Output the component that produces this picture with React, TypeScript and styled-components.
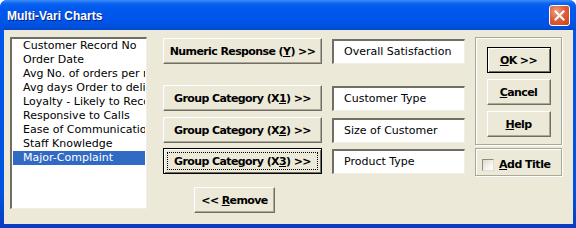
import React from "react";
import styled, { createGlobalStyle } from "styled-components";

const Global = createGlobalStyle`
  html, body { margin: 0; padding: 0; background: #ffffff; }
  body { width: 576px; height: 228px; overflow: hidden; }
`;

const Window = styled.div`
  width: 576px;
  height: 228px;
  display: flex;
  flex-direction: column;
  box-sizing: border-box;
  background: linear-gradient(180deg, #0058ee 0%, #0053e0 85%, #0a3cc0 100%);
  border-radius: 7px 7px 0 0;
  overflow: hidden;
`;

const TitleBar = styled.div`
  height: 30px;
  flex: none;
  display: flex;
  align-items: center;
  justify-content: space-between;
  padding: 0 6px 0 7px;
  box-sizing: border-box;
  background: linear-gradient(
    180deg,
    #3d8ef8 0%,
    #0a62f0 12%,
    #0058ee 30%,
    #0055e8 70%,
    #0050dc 90%,
    #0046c8 100%
  );
`;

const Title = styled.span`
  font-family: "Liberation Sans", Arial, sans-serif;
  font-weight: bold;
  font-size: 12px;
  color: #ffffff;
  text-shadow: 1px 1px 0 #0a1e80;
  margin-top: 1px;
`;

const CloseButton = styled.div`
  width: 21px;
  height: 21px;
  box-sizing: border-box;
  border: 1px solid #ffffff;
  border-radius: 3px;
  background: radial-gradient(circle at 35% 30%, #f0a088 0%, #e0603c 45%, #c8401c 100%);
  display: flex;
  align-items: center;
  justify-content: center;
  margin-top: 1px;
`;

const Client = styled.div`
  flex: 1;
  margin: 0 3px 4px 4px;
  background: #ece9d8;
  display: flex;
  align-items: flex-start;
  padding: 7px 0 0 6px;
  box-sizing: border-box;
`;

const ListBox = styled.div`
  width: 137px;
  height: 172px;
  box-sizing: border-box;
  background: #ffffff;
  border-top: 2px solid #716f64;
  border-left: 2px solid #716f64;
  border-right: 1px solid #f1efe2;
  border-bottom: 1px solid #f1efe2;
  padding: 0 1px 0 1px;
  display: flex;
  flex-direction: column;
  overflow: hidden;
`;

const ListItem = styled.div<{ $selected?: boolean }>`
  font-family: "DejaVu Sans", sans-serif;
  font-size: 11px;
  line-height: 14px;
  height: 14px;
  flex: none;
  padding-left: 10px;
  white-space: nowrap;
  overflow: hidden;
  color: ${(p) => (p.$selected ? "#ffffff" : "#000000")};
  background: ${(p) => (p.$selected ? "#316ac5" : "transparent")};
`;

const Middle = styled.div`
  display: flex;
  flex-direction: column;
  margin-left: 16px;
`;

const Row = styled.div<{ $top: number; $indent?: number }>`
  display: flex;
  align-items: center;
  margin-top: ${(p) => p.$top}px;
  padding-left: ${(p) => p.$indent ?? 0}px;
`;

const Button = styled.div<{ $w: number; $h?: number; $focus?: boolean; $default?: boolean }>`
  width: ${(p) => p.$w}px;
  height: ${(p) => p.$h ?? 26}px;
  box-sizing: border-box;
  flex: none;
  position: relative;
  display: flex;
  align-items: center;
  justify-content: center;
  background: #ece9d8;
  font-family: "DejaVu Sans", sans-serif;
  font-weight: bold;
  font-size: 11px;
  letter-spacing: -0.6px;
  color: #000000;
  white-space: pre;
  ${(p) =>
    p.$focus || p.$default
      ? `border: 1px solid #000000;
         box-shadow: inset 1px 1px 0 #ffffff, inset -1px -1px 0 #716f64;`
      : `border-top: 1px solid #ffffff;
         border-left: 1px solid #ffffff;
         border-right: 1px solid #716f64;
         border-bottom: 1px solid #716f64;
         box-shadow: inset -1px -1px 0 #aca899;`}
`;

const Label = styled.span`
  display: inline-block;
`;

const FocusRing = styled.span`
  position: absolute;
  left: 3px;
  top: 3px;
  right: 3px;
  bottom: 3px;
  border: 1px dotted #000000;
  pointer-events: none;
`;

const U = styled.span`
  text-decoration: underline;
`;

const TextBox = styled.div`
  width: 133px;
  height: 25px;
  box-sizing: border-box;
  margin-left: 10px;
  background: #ffffff;
  border-top: 2px solid #716f64;
  border-left: 2px solid #716f64;
  border-right: 1px solid #f1efe2;
  border-bottom: 1px solid #f1efe2;
  padding-left: 10px;
  display: flex;
  align-items: center;
  font-family: "DejaVu Sans", sans-serif;
  font-size: 11px;
  color: #000000;
  white-space: nowrap;
`;

const RightColumn = styled.div`
  display: flex;
  flex-direction: column;
  margin-left: 10px;
`;

const Frame = styled.div<{ $h: number; $top?: number }>`
  width: 87px;
  height: ${(p) => p.$h}px;
  box-sizing: border-box;
  margin-top: ${(p) => p.$top ?? 0}px;
  border: 1px solid #aca899;
  box-shadow: inset 1px 1px 0 #ffffff, 1px 1px 0 #ffffff;
  display: flex;
  flex-direction: column;
  align-items: center;
`;

const ButtonStack = styled.div`
  display: flex;
  flex-direction: column;
  gap: 6px;
  padding-top: 9px;
`;

const CheckRow = styled.div`
  display: flex;
  align-items: center;
  align-self: flex-start;
  padding: 9px 0 0 6px;
  gap: 5px;
  font-family: "DejaVu Sans", sans-serif;
  font-weight: bold;
  font-size: 11px;
  letter-spacing: -0.5px;
`;

const CheckBox = styled.span`
  width: 12px;
  height: 12px;
  box-sizing: border-box;
  border-top: 1px solid #8e8c80;
  border-left: 1px solid #8e8c80;
  border-right: 1px solid #e2dfd2;
  border-bottom: 1px solid #e2dfd2;
  background: linear-gradient(135deg, #dcdad0 0%, #f4f3ee 60%, #ffffff 100%);
`;

const items = [
  "Customer Record No",
  "Order Date",
  "Avg No. of orders per month",
  "Avg days Order to delivery",
  "Loyalty - Likely to Recommend",
  "Responsive to Calls",
  "Ease of Communication",
  "Staff Knowledge",
  "Major-Complaint",
];

export default function App() {
  return (
    <>
      <Global />
      <Window>
        <TitleBar>
          <Title>Multi-Vari Charts</Title>
          <CloseButton>
            <svg width="11" height="11" viewBox="0 0 11 11">
              <path d="M1.5 1.5 L9.5 9.5 M9.5 1.5 L1.5 9.5" stroke="#ffffff" strokeWidth="2" strokeLinecap="square" />
            </svg>
          </CloseButton>
        </TitleBar>
        <Client>
          <ListBox>
            {items.map((t, i) => (
              <ListItem key={t} $selected={i === items.length - 1}>
                {t}
              </ListItem>
            ))}
          </ListBox>
          <Middle>
            <Row $top={1}>
              <Button $w={159}>
                <Label>
                  Numeric Response (<U>Y</U>) &gt;&gt;
                </Label>
              </Button>
              <TextBox>Overall Satisfaction</TextBox>
            </Row>
            <Row $top={21}>
              <Button $w={159}>
                <Label>
                  Group Category (X<U>1</U>) &gt;&gt;
                </Label>
              </Button>
              <TextBox>Customer Type</TextBox>
            </Row>
            <Row $top={6}>
              <Button $w={159}>
                <Label>
                  Group Category (X<U>2</U>) &gt;&gt;
                </Label>
              </Button>
              <TextBox>Size of Customer</TextBox>
            </Row>
            <Row $top={5}>
              <Button $w={159} $focus>
                <FocusRing />
                <Label>
                  Group Category (X<U>3</U>) &gt;&gt;
                </Label>
              </Button>
              <TextBox>Product Type</TextBox>
            </Row>
            <Row $top={13} $indent={31}>
              <Button $w={81}>
                <Label>
                  &lt;&lt; <U>R</U>emove
                </Label>
              </Button>
            </Row>
          </Middle>
          <RightColumn>
            <Frame $h={108}>
              <ButtonStack>
                <Button $w={64} $default>
                  <Label>
                    <U>O</U>K &gt;&gt;
                  </Label>
                </Button>
                <Button $w={64}>
                  <Label>
                    <U>C</U>ancel
                  </Label>
                </Button>
                <Button $w={64}>
                  <Label>
                    <U>H</U>elp
                  </Label>
                </Button>
              </ButtonStack>
            </Frame>
            <Frame $h={28} $top={3}>
              <CheckRow>
                <CheckBox />
                <Label>
                  <U>A</U>dd Title
                </Label>
              </CheckRow>
            </Frame>
          </RightColumn>
        </Client>
      </Window>
    </>
  );
}
